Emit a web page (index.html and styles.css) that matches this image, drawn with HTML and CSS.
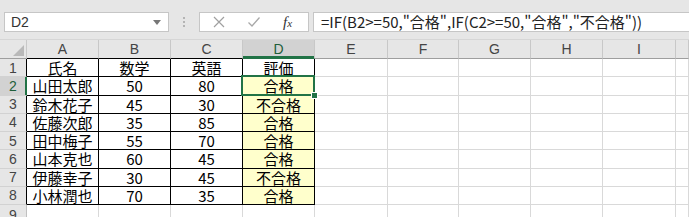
FILE: index.html
```html
<!DOCTYPE html>
<html lang="ja">
<head>
    <meta charset="UTF-8">
    <title>成績判定</title>
    <link rel="stylesheet" href="styles.css">
</head>
<body>
    <div class="topbar">
        <div class="namebox">
            <span>D2</span>
            <svg class="arrow" width="8" height="5" viewBox="0 0 8 5"><polygon points="0,0 8,0 4,5" fill="#777"/></svg>
        </div>
        <div class="dots"><i></i><i></i><i></i></div>
        <div class="buttons">
            <svg width="14" height="14" viewBox="0 0 14 14"><path d="M2 2 L12 12 M12 2 L2 12" stroke="#a0a0a0" stroke-width="1.2" fill="none"/></svg>
            <svg width="14" height="14" viewBox="0 0 14 14"><path d="M1.5 7.5 L5 11 L12.5 2.5" stroke="#a8a8a8" stroke-width="1.3" fill="none"/></svg>
            <span class="fx">f<small>x</small></span>
        </div>
        <div class="formula">=IF(B2&gt;=50,"合格",IF(C2&gt;=50,"合格","不合格"))</div>
    </div>

    <div class="sheet">
        <!-- column headers -->
        <div class="corner"><svg width="11" height="11" viewBox="0 0 11 11"><polygon points="11,0 11,11 0,11" fill="#b9b9b9"/></svg></div>
        <div class="ch dark">A</div>
        <div class="ch dark">B</div>
        <div class="ch dark">C</div>
        <div class="ch on">D</div>
        <div class="ch">E</div>
        <div class="ch">F</div>
        <div class="ch">G</div>
        <div class="ch">H</div>
        <div class="ch">I</div>
        <div class="ch"></div>

        <!-- row 1 -->
        <div class="rh edge">1</div>
        <div class="c t">氏名</div><div class="c t">数学</div><div class="c t">英語</div><div class="c t">評価</div>
        <div class="c"></div><div class="c"></div><div class="c"></div><div class="c"></div><div class="c"></div><div class="c"></div>

        <!-- row 2 -->
        <div class="rh edge on">2</div>
        <div class="c t">山田太郎</div><div class="c t">50</div><div class="c t">80</div>
        <div class="c t ev sel">合格<span class="handle"></span></div>
        <div class="c"></div><div class="c"></div><div class="c"></div><div class="c"></div><div class="c"></div><div class="c"></div>

        <!-- row 3 -->
        <div class="rh edge">3</div>
        <div class="c t">鈴木花子</div><div class="c t">45</div><div class="c t">30</div><div class="c t ev">不合格</div>
        <div class="c"></div><div class="c"></div><div class="c"></div><div class="c"></div><div class="c"></div><div class="c"></div>

        <!-- row 4 -->
        <div class="rh edge">4</div>
        <div class="c t">佐藤次郎</div><div class="c t">35</div><div class="c t">85</div><div class="c t ev">合格</div>
        <div class="c"></div><div class="c"></div><div class="c"></div><div class="c"></div><div class="c"></div><div class="c"></div>

        <!-- row 5 -->
        <div class="rh edge">5</div>
        <div class="c t">田中梅子</div><div class="c t">55</div><div class="c t">70</div><div class="c t ev">合格</div>
        <div class="c"></div><div class="c"></div><div class="c"></div><div class="c"></div><div class="c"></div><div class="c"></div>

        <!-- row 6 -->
        <div class="rh edge">6</div>
        <div class="c t">山本克也</div><div class="c t">60</div><div class="c t">45</div><div class="c t ev">合格</div>
        <div class="c"></div><div class="c"></div><div class="c"></div><div class="c"></div><div class="c"></div><div class="c"></div>

        <!-- row 7 -->
        <div class="rh edge">7</div>
        <div class="c t">伊藤幸子</div><div class="c t">30</div><div class="c t">45</div><div class="c t ev">不合格</div>
        <div class="c"></div><div class="c"></div><div class="c"></div><div class="c"></div><div class="c"></div><div class="c"></div>

        <!-- row 8 -->
        <div class="rh edge">8</div>
        <div class="c t">小林潤也</div><div class="c t">70</div><div class="c t">35</div><div class="c t ev">合格</div>
        <div class="c"></div><div class="c"></div><div class="c"></div><div class="c"></div><div class="c"></div><div class="c"></div>

        <!-- row 9 -->
        <div class="rh">9</div>
        <div class="c"></div><div class="c"></div><div class="c"></div><div class="c"></div><div class="c"></div>
        <div class="c"></div><div class="c"></div><div class="c"></div><div class="c"></div><div class="c"></div>
    </div>
</body>
</html>
```

FILE: styles.css
```css
body {
    margin: 0;
    background: #fff;
    font-family: "Noto Sans CJK JP", "Noto Sans", sans-serif;
    color: #000;
    overflow: hidden;
}

/* formula bar */
.topbar {
    height: 40px;
    box-sizing: border-box;
    background: #e6e6e6;
    display: flex;
    align-items: flex-start;
    padding: 12px 0 0 4px;
    border-bottom: 1px solid #d6d6d6;
}

.namebox, .buttons, .formula {
    height: 20px;
    box-sizing: border-box;
    background: #fff;
    border: 1px solid #c6c6c6;
}

.namebox {
    width: 165px;
    display: flex;
    align-items: center;
    justify-content: space-between;
    padding: 0 7px 0 6px;
    font-family: "Liberation Sans", sans-serif;
    font-size: 14px;
    color: #333;
}

.dots {
    width: 30px;
    height: 20px;
    display: flex;
    flex-direction: column;
    align-items: center;
    justify-content: center;
    gap: 2px;
}

.dots i {
    width: 2px;
    height: 2px;
    background: #b4b4b4;
}

.buttons {
    width: 110px;
    display: flex;
    align-items: center;
    gap: 21px;
    padding-left: 12px;
}

.fx {
    font-family: "Liberation Serif", serif;
    font-style: italic;
    font-size: 15px;
    color: #333;
    margin-left: 1px;
}

.fx small {
    font-size: 11px;
}

.formula {
    flex: 1;
    margin-left: 4px;
    border-right: none;
    padding-left: 7px;
    font-size: 15px;
    line-height: 18px;
    color: #222;
    white-space: nowrap;
}

/* grid */
.sheet {
    display: grid;
    grid-template-columns: 27px 72px 72px 72px 72px 73px 71px 72px 72px 73px 1fr;
    grid-template-rows: 19px repeat(8, 18.25px) 20px;
}

.sheet > div {
    box-sizing: border-box;
    display: flex;
    align-items: center;
    justify-content: center;
    border-right: 1px solid #d9d9d9;
    border-bottom: 1px solid #d9d9d9;
}

.corner {
    background: #e6e6e6;
    border-bottom-color: #9e9e9e !important;
    border-right-color: #c8c8c8 !important;
    justify-content: flex-end !important;
    align-items: flex-end !important;
    padding: 0 2px 2px 0;
}

.ch {
    background: #e6e6e6;
    font-family: "Liberation Sans", sans-serif;
    font-size: 14px;
    color: #444;
    border-right-color: #c8c8c8 !important;
    border-bottom-color: #9e9e9e !important;
}

.ch.dark {
    border-bottom-color: #000 !important;
}

.ch.on {
    background: #d2d2d2;
    color: #1e5e3a;
    box-shadow: inset 0 -2px #217346;
    border-bottom-color: #217346 !important;
}

.rh {
    background: #e6e6e6;
    font-family: "Liberation Sans", sans-serif;
    font-size: 14px;
    color: #444;
    border-right-color: #c0c0c0 !important;
    border-bottom-color: #d2d2d2 !important;
}

.rh.edge {
    border-right-color: #000 !important;
}

.rh.on {
    background: #d2d2d2;
    color: #1e5e3a;
    border-right-color: #217346 !important;
    box-shadow: inset -1px 0 #217346;
}

.c {
    font-size: 15px;
    line-height: 1;
}

.c.t {
    border-right-color: #000 !important;
    border-bottom-color: #000 !important;
}

.c.ev {
    background: #ffffcc;
}

.sel {
    position: relative;
}

.sel::after {
    content: "";
    position: absolute;
    top: -2px;
    left: -2px;
    right: -1px;
    bottom: -1px;
    border: 2px solid #217346;
}

.handle {
    position: absolute;
    right: -4px;
    bottom: -4px;
    width: 5px;
    height: 5px;
    background: #217346;
    border: 1px solid #fff;
    z-index: 2;
}
```
